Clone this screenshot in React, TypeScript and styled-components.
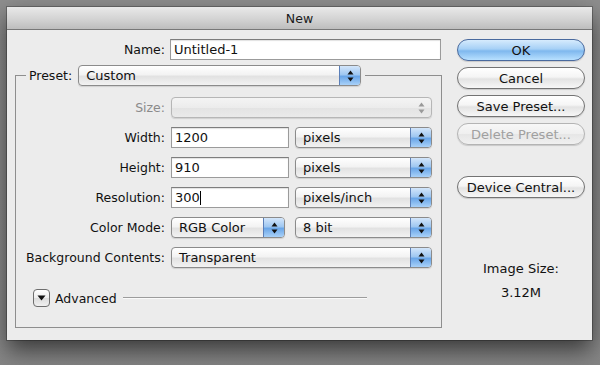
import styled, { createGlobalStyle } from "styled-components";

const GlobalStyle = createGlobalStyle`
    html, body {
        margin: 0;
        padding: 0;
    }
    body {
        width: 600px;
        height: 365px;
        overflow: hidden;
        background: #8c8c8c;
        font-family: "DejaVu Sans", "Liberation Sans", sans-serif;
        font-size: 12.5px;
        color: #111;
    }
`;

const Desktop = styled.div`
    width: 600px;
    height: 365px;
    padding: 7px 0 0 7px;
    box-sizing: border-box;
    background: linear-gradient(to bottom, #8e8e8e 0px, #8c8c8c 330px, #858585 365px);
`;

const Window = styled.div`
    width: 585px;
    height: 333px;
    background: #ececec;
    box-shadow: 0 10px 22px rgba(0, 0, 0, 0.6), 0 0 0 1px rgba(0, 0, 0, 0.25);
    display: flex;
    flex-direction: column;
`;

const TitleBar = styled.div`
    height: 22px;
    flex-shrink: 0;
    background: linear-gradient(to bottom, #e9e9e9 0%, #d3d3d3 55%, #bdbdbd 100%);
    border-bottom: 1px solid #777;
    display: flex;
    align-items: center;
    justify-content: center;
    font-size: 12.5px;
    color: #1a1a1a;
`;

const Body = styled.div`
    display: flex;
    padding: 9px 0 0 8px;
`;

const LeftColumn = styled.div`
    width: 427px;
    display: flex;
    flex-direction: column;
`;

const RightColumn = styled.div`
    width: 128px;
    margin-left: 15px;
    display: flex;
    flex-direction: column;
    gap: 6px;
`;

const NameRow = styled.div`
    display: grid;
    grid-template-columns: 150px 271px;
    column-gap: 5px;
    align-items: center;
`;

const Label = styled.span<{ $disabled?: boolean }>`
    text-align: right;
    white-space: nowrap;
    color: ${p => (p.$disabled ? "#8a8a8a" : "#111")};
`;

const TextInput = styled.div<{ $width?: number }>`
    height: 21px;
    width: ${p => (p.$width ? `${p.$width}px` : "auto")};
    box-sizing: border-box;
    background: #fff;
    border: 1px solid #9b9b9b;
    border-top-color: #7d7d7d;
    box-shadow: inset 0 1px 1px rgba(0, 0, 0, 0.12);
    padding: 0 3px;
    display: flex;
    align-items: center;
    font-size: 13px;
    white-space: nowrap;
`;

const Caret = styled.span`
    display: inline-block;
    width: 1px;
    height: 14px;
    background: #000;
`;

const GroupBox = styled.fieldset`
    margin: 5px 0 0 0;
    padding: 11px 8px 20px 0;
    border: 1px solid #8e8e8e;
    min-width: 0;
`;

const Legend = styled.legend`
    margin-left: 10px;
    padding: 0 4px 0 3px;
    display: flex;
    align-items: center;
    gap: 6px;
`;

const Rows = styled.div`
    display: flex;
    flex-direction: column;
    gap: 9px;
`;

const Row = styled.div`
    display: grid;
    grid-template-columns: 149px auto;
    column-gap: 6px;
    align-items: center;
`;

const Controls = styled.div<{ $gap?: number }>`
    display: flex;
    gap: ${p => p.$gap ?? 6}px;
    align-items: center;
`;

const PopupBox = styled.div<{ $width: number; $disabled?: boolean }>`
    width: ${p => p.$width}px;
    height: 21px;
    box-sizing: border-box;
    border: 1px solid ${p => (p.$disabled ? "#b6b6b6" : "#8b8b8b")};
    border-radius: 4px;
    background: ${p =>
        p.$disabled
            ? "linear-gradient(to bottom, #f4f4f4 0%, #ececec 50%, #e3e3e3 51%, #eaeaea 100%)"
            : "linear-gradient(to bottom, #ffffff 0%, #f3f3f3 45%, #e2e2e2 55%, #f2f2f2 100%)"};
    box-shadow: 0 1px 1px rgba(0, 0, 0, 0.12);
    display: flex;
    align-items: stretch;
    overflow: hidden;
`;

const PopupText = styled.span`
    flex: 1;
    padding-left: 7px;
    display: flex;
    align-items: center;
    font-size: 13px;
    white-space: nowrap;
`;

const PopupCap = styled.span<{ $disabled?: boolean }>`
    width: 20px;
    display: flex;
    align-items: center;
    justify-content: center;
    border-left: 1px solid ${p => (p.$disabled ? "transparent" : "#5b7fb8")};
    background: ${p =>
        p.$disabled
            ? "transparent"
            : "linear-gradient(to bottom, #d3e6fb 0%, #9fc7f1 45%, #6aa6e8 55%, #a9d1f8 100%)"};
`;

const AdvancedRow = styled.div`
    margin-top: 21px;
    padding-left: 17px;
    display: flex;
    align-items: center;
    gap: 5px;
`;

const Disclosure = styled.span`
    width: 17px;
    height: 18px;
    box-sizing: border-box;
    border: 1px solid #6e6e6e;
    border-radius: 4px;
    background: linear-gradient(to bottom, #ffffff 0%, #ededed 50%, #dcdcdc 51%, #f0f0f0 100%);
    display: flex;
    align-items: center;
    justify-content: center;
`;

const Rule = styled.span`
    margin-left: 1px;
    width: 244px;
    height: 1px;
    background: #9c9c9c;
    border-bottom: 1px solid #fafafa;
`;

const PushButton = styled.div<{ $primary?: boolean; $disabled?: boolean }>`
    height: 22px;
    box-sizing: border-box;
    border-radius: 11px;
    border: 1px solid ${p => (p.$primary ? "#4a6a9e" : p.$disabled ? "#b4b4b4" : "#737373")};
    background: ${p =>
        p.$primary
            ? "linear-gradient(to bottom, #d6ebfd 0%, #a6d0f6 45%, #7fb8ee 55%, #b8e0ff 100%)"
            : p.$disabled
            ? "linear-gradient(to bottom, #f7f7f7 0%, #efefef 50%, #e6e6e6 51%, #f0f0f0 100%)"
            : "linear-gradient(to bottom, #ffffff 0%, #f5f5f5 45%, #e3e3e3 55%, #f7f7f7 100%)"};
    box-shadow: 0 1px 1px rgba(0, 0, 0, 0.15);
    display: flex;
    align-items: center;
    justify-content: center;
    font-size: 13px;
    color: ${p => (p.$disabled ? "#a0a0a0" : "#111")};
    white-space: nowrap;
`;

const Spacer = styled.div`
    height: 19px;
`;

const InfoBlock = styled.div`
    margin-top: 57px;
    display: flex;
    flex-direction: column;
    align-items: center;
    gap: 9px;
    font-size: 13px;
`;

function Arrows(props: { disabled?: boolean }) {
    const c = props.disabled ? "#9a9a9a" : "#111";
    return (
        <svg width="7" height="12" viewBox="0 0 7 12">
            <polygon points="3.5,0.5 6.5,4.5 0.5,4.5" fill={c} />
            <polygon points="0.5,7.5 6.5,7.5 3.5,11.5" fill={c} />
        </svg>
    );
}

function Popup(props: { width: number; value?: string; disabled?: boolean }) {
    return (
        <PopupBox $width={props.width} $disabled={props.disabled}>
            <PopupText>{props.value}</PopupText>
            <PopupCap $disabled={props.disabled}>
                <Arrows disabled={props.disabled} />
            </PopupCap>
        </PopupBox>
    );
}

export default function App() {
    return (
        <>
            <GlobalStyle />
            <Desktop>
                <Window>
                    <TitleBar>New</TitleBar>
                    <Body>
                        <LeftColumn>
                            <NameRow>
                                <Label>Name:</Label>
                                <TextInput>Untitled-1</TextInput>
                            </NameRow>
                            <GroupBox>
                                <Legend>
                                    <Label>Preset:</Label>
                                    <Popup width={283} value="Custom" />
                                </Legend>
                                <Rows>
                                    <Row>
                                        <Label $disabled>Size:</Label>
                                        <Popup width={261} disabled />
                                    </Row>
                                    <Row>
                                        <Label>Width:</Label>
                                        <Controls>
                                            <TextInput $width={118}>1200</TextInput>
                                            <Popup width={137} value="pixels" />
                                        </Controls>
                                    </Row>
                                    <Row>
                                        <Label>Height:</Label>
                                        <Controls>
                                            <TextInput $width={118}>910</TextInput>
                                            <Popup width={137} value="pixels" />
                                        </Controls>
                                    </Row>
                                    <Row>
                                        <Label>Resolution:</Label>
                                        <Controls>
                                            <TextInput $width={118}>300<Caret /></TextInput>
                                            <Popup width={137} value="pixels/inch" />
                                        </Controls>
                                    </Row>
                                    <Row>
                                        <Label>Color Mode:</Label>
                                        <Controls $gap={10}>
                                            <Popup width={114} value="RGB Color" />
                                            <Popup width={137} value="8 bit" />
                                        </Controls>
                                    </Row>
                                    <Row>
                                        <Label>Background Contents:</Label>
                                        <Popup width={261} value="Transparent" />
                                    </Row>
                                </Rows>
                                <AdvancedRow>
                                    <Disclosure>
                                        <svg width="9" height="6" viewBox="0 0 9 6">
                                            <polygon points="0.5,0.5 8.5,0.5 4.5,5.5" fill="#111" />
                                        </svg>
                                    </Disclosure>
                                    <span>Advanced</span>
                                    <Rule />
                                </AdvancedRow>
                            </GroupBox>
                        </LeftColumn>
                        <RightColumn>
                            <PushButton $primary>OK</PushButton>
                            <PushButton>Cancel</PushButton>
                            <PushButton>Save Preset...</PushButton>
                            <PushButton $disabled>Delete Preset...</PushButton>
                            <Spacer />
                            <PushButton>Device Central...</PushButton>
                            <InfoBlock>
                                <span>Image Size:</span>
                                <span>3.12M</span>
                            </InfoBlock>
                        </RightColumn>
                    </Body>
                </Window>
            </Desktop>
        </>
    );
}
